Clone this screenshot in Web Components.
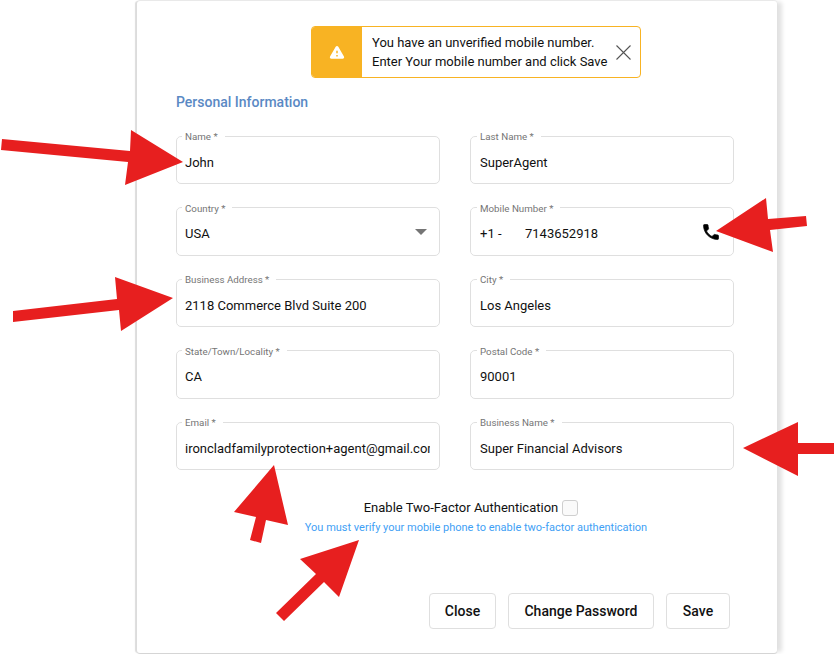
<!DOCTYPE html>
<html lang="en">
<head>
<meta charset="utf-8">
<title>Personal Information</title>
<style>
  html, body { margin: 0; background: #fff; }
  body { width: 834px; height: 654px; overflow: hidden; position: relative; font-family: Roboto, "Liberation Sans", sans-serif; color: #000; }
</style>
</head>
<body>
<profile-card>
  <alert-banner slot="alert">
    <span>You have an unverified mobile number.</span>
    <span>Enter Your mobile number and click Save</span>
  </alert-banner>
  <form-field label="Name *">John</form-field>
  <form-field label="Last Name *" inset>SuperAgent</form-field>
  <form-field label="Country *">USA<select-caret slot="suffix"></select-caret></form-field>
  <form-field label="Mobile Number *" inset><phone-value prefix="+1 -" number="7143652918"></phone-value><phone-icon slot="suffix"></phone-icon></form-field>
  <form-field label="Business Address *">2118 Commerce Blvd Suite 200</form-field>
  <form-field label="City *" inset>Los Angeles</form-field>
  <form-field label="State/Town/Locality *">CA</form-field>
  <form-field label="Postal Code *" inset>90001</form-field>
  <form-field label="Email *">ironcladfamilyprotection+agent@gmail.com</form-field>
  <form-field label="Business Name *" inset>Super Financial Advisors</form-field>
  <two-factor slot="after">You must verify your mobile phone to enable two-factor authentication</two-factor>
  <action-button slot="actions" style="width:67px">Close</action-button>
  <action-button slot="actions" style="width:146px">Change Password</action-button>
  <action-button slot="actions" style="width:64px">Save</action-button>
</profile-card>

<red-arrow points="2,139 130,151 131,130 183,162 125,185 128,162 1,150"></red-arrow>
<red-arrow points="716,231 766,198 768,219 806,216 807,226 770,230 773,252"></red-arrow>
<red-arrow points="13,311 117,299 115,277 173,298 121,331 119,310 13,322"></red-arrow>
<red-arrow points="274,465 288,525 266,520 261,543 250,540 256,517 234,512"></red-arrow>
<red-arrow points="743,448 798,422 798,443 834,443 834,454 798,454 798,476"></red-arrow>
<red-arrow points="359,540 339,597 324,582 284,621 276,613 316,574 300,559"></red-arrow>

<script>
class ProfileCard extends HTMLElement {
  constructor() {
    super();
    this.attachShadow({ mode: 'open' });
    this.shadowRoot.innerHTML = `
      <style>
        :host {
          display: block;
          box-sizing: border-box;
          width: 640px;
          height: 652px;
          margin: 1px 0 0 137px;
          padding: 25px 43px 0 39px;
          background: #fff;
          border-radius: 3px;
          box-shadow: -2px 0 1px #dcdcdc, 0 -1px 1px #e8e8e8, 0 1px 1px #d0d0d0, 6px 0 4px -1px #e2e2e2;
        }
        .alert { display: flex; padding-left: 135px; }
        h2 {
          margin: 14px 0 18px;
          font: 500 14px/20px Roboto, "Liberation Sans", sans-serif;
          color: #5a89c4;
        }
        .grid {
          display: grid;
          grid-template-columns: 264px 264px;
          column-gap: 30px;
          row-gap: 17.5px;
        }
        .actions {
          display: flex;
          justify-content: flex-end;
          gap: 12px;
          margin: 58px 4px 0 0;
        }
      </style>
      <div class="alert"><slot name="alert"></slot></div>
      <h2>Personal Information</h2>
      <div class="grid"><slot></slot></div>
      <slot name="after"></slot>
      <div class="actions"><slot name="actions"></slot></div>
    `;
  }
}

class AlertBanner extends HTMLElement {
  constructor() {
    super();
    this.attachShadow({ mode: 'open' });
    this.shadowRoot.innerHTML = `
      <style>
        :host {
          display: flex;
          box-sizing: border-box;
          width: 330px;
          height: 52px;
          border: 1px solid #f8b323;
          border-radius: 4px;
          overflow: hidden;
          background: #fff;
        }
        .side {
          flex: none;
          width: 50px;
          background: #f8b323;
          display: flex;
          align-items: center;
          justify-content: center;
        }
        .text {
          flex: 1;
          min-width: 0;
          display: flex;
          flex-direction: column;
          justify-content: center;
          padding-left: 10px;
          font-size: 13px;
          line-height: 19.5px;
          color: #111;
          white-space: nowrap;
        }
        ::slotted(span) { display: block; }
        .close {
          flex: none;
          width: 15px;
          margin-right: 9px;
          display: flex;
          align-items: center;
          justify-content: center;
        }
      </style>
      <div class="side">
        <svg width="18" height="18" viewBox="0 0 24 24"><path fill="#fff" d="M4.47 21h15.06c1.54 0 2.5-1.67 1.73-3L13.73 4.99c-.77-1.33-2.69-1.33-3.46 0L2.74 18c-.77 1.33.19 3 1.73 3zM12 14c-.55 0-1-.45-1-1v-2c0-.55.45-1 1-1s1 .45 1 1v2c0 .55-.45 1-1 1zm1 4h-2v-2h2v2z"/></svg>
      </div>
      <div class="text"><slot></slot></div>
      <div class="close">
        <svg width="15" height="15" viewBox="0 0 15 15"><path d="M.5.5l14 14M14.5.5l-14 14" stroke="#555" stroke-width="1.1" fill="none"/></svg>
      </div>
    `;
  }
}

class FormField extends HTMLElement {
  constructor() {
    super();
    this.attachShadow({ mode: 'open' });
  }

  connectedCallback() {
    const inset = this.hasAttribute('inset') ? 9 : 8;
    this.shadowRoot.innerHTML = `
      <style>
        :host { display: block; height: 54px; min-width: 0; }
        fieldset {
          box-sizing: border-box;
          height: 100%;
          margin: 0;
          padding: 0;
          min-width: 0;
          border: 1px solid #dfdfdf;
          border-radius: 5px;
        }
        legend {
          margin-left: ${inset - 3}px;
          padding: 2px 7px 0 3px;
          font-size: 9.75px;
          line-height: 10px;
          color: #757575;
          white-space: nowrap;
        }
        .body {
          display: flex;
          align-items: center;
          height: 100%;
          padding: 0 9px 0 ${inset}px;
          box-sizing: border-box;
        }
        .value {
          flex: 1;
          min-width: 0;
          overflow: hidden;
          white-space: nowrap;
          font-size: 13px;
          line-height: 20px;
          color: #111;
        }
      </style>
      <fieldset>
        <legend>${this.getAttribute('label')}</legend>
        <div class="body">
          <div class="value"><slot></slot></div>
          <slot name="suffix"></slot>
        </div>
      </fieldset>
    `;
  }
}

class PhoneValue extends HTMLElement {
  constructor() {
    super();
    this.attachShadow({ mode: 'open' });
  }

  connectedCallback() {
    this.shadowRoot.innerHTML = `
      <style>
        :host { display: flex; }
        .prefix { width: 45px; }
      </style>
      <span class="prefix">${this.getAttribute('prefix')}</span>
      <span>${this.getAttribute('number')}</span>
    `;
  }
}

class SelectCaret extends HTMLElement {
  constructor() {
    super();
    this.attachShadow({ mode: 'open' });
    this.shadowRoot.innerHTML = `
      <style>
        :host {
          display: block;
          width: 0;
          height: 0;
          margin: -5px 3px 0 0;
          border-left: 6px solid transparent;
          border-right: 6px solid transparent;
          border-top: 6px solid #757575;
        }
      </style>
    `;
  }
}

class PhoneIcon extends HTMLElement {
  constructor() {
    super();
    this.attachShadow({ mode: 'open' });
    this.shadowRoot.innerHTML = `
      <style>
        :host { display: block; width: 20px; height: 20px; margin: -5px 3px 0 0; }
        svg { display: block; }
      </style>
      <svg width="20" height="20" viewBox="0 0 24 24"><path fill="#000" stroke="#000" stroke-width=".8" d="M6.62 10.79c1.44 2.83 3.76 5.14 6.59 6.59l2.2-2.2c.27-.27.67-.36 1.02-.24 1.12.37 2.33.57 3.57.57.55 0 1 .45 1 1V20c0 .55-.45 1-1 1-9.39 0-17-7.61-17-17 0-.55.45-1 1-1h3.5c.55 0 1 .45 1 1 0 1.25.2 2.45.57 3.57.11.35.03.74-.25 1.02l-2.2 2.2z"/></svg>
    `;
  }
}

class TwoFactor extends HTMLElement {
  constructor() {
    super();
    this.attachShadow({ mode: 'open' });
    this.shadowRoot.innerHTML = `
      <style>
        :host { display: block; margin-top: 27.5px; }
        .row {
          display: flex;
          justify-content: center;
          align-items: center;
          gap: 4px;
          height: 20px;
          margin-left: 32px;
          font-size: 13px;
          color: #111;
        }
        .box {
          box-sizing: border-box;
          width: 16px;
          height: 16px;
          border: 1px solid #cfcfcf;
          border-radius: 3px;
          background: #fafafa;
        }
        .hint {
          margin: 3.5px 0 0 42px;
          text-align: center;
          font-size: 11px;
          line-height: 14px;
          color: #3f9ff5;
          white-space: nowrap;
        }
      </style>
      <div class="row"><span>Enable Two-Factor Authentication</span><span class="box"></span></div>
      <div class="hint"><slot></slot></div>
    `;
  }
}

class ActionButton extends HTMLElement {
  constructor() {
    super();
    this.attachShadow({ mode: 'open' });
    this.shadowRoot.innerHTML = `
      <style>
        :host {
          display: flex;
          align-items: center;
          justify-content: center;
          box-sizing: border-box;
          height: 36px;
          border: 1px solid #dfdfdf;
          border-radius: 4px;
          background: #fff;
          font-size: 14px;
          font-weight: 500;
          color: #111;
          white-space: nowrap;
        }
      </style>
      <slot></slot>
    `;
  }
}

class RedArrow extends HTMLElement {
  constructor() {
    super();
    this.attachShadow({ mode: 'open' });
  }

  connectedCallback() {
    this.shadowRoot.innerHTML = `
      <style>
        :host { position: absolute; left: 0; top: 0; width: 834px; height: 654px; pointer-events: none; }
        svg { display: block; }
      </style>
      <svg width="834" height="654" viewBox="0 0 834 654"><polygon fill="#e71f1f" points="${this.getAttribute('points')}"/></svg>
    `;
  }
}

customElements.define('profile-card', ProfileCard);
customElements.define('alert-banner', AlertBanner);
customElements.define('form-field', FormField);
customElements.define('phone-value', PhoneValue);
customElements.define('select-caret', SelectCaret);
customElements.define('phone-icon', PhoneIcon);
customElements.define('two-factor', TwoFactor);
customElements.define('action-button', ActionButton);
customElements.define('red-arrow', RedArrow);
</script>
</body>
</html>
